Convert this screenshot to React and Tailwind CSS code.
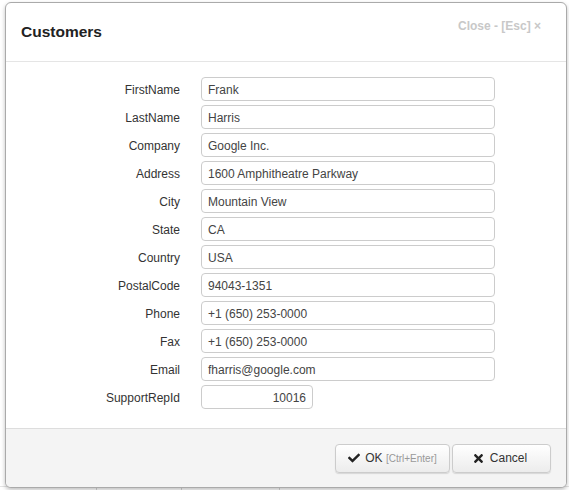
import React from "react";
import { FaCheck, FaTimes } from "react-icons/fa";

const fields = [
  ["FirstName", "Frank"],
  ["LastName", "Harris"],
  ["Company", "Google Inc."],
  ["Address", "1600 Amphitheatre Parkway"],
  ["City", "Mountain View"],
  ["State", "CA"],
  ["Country", "USA"],
  ["PostalCode", "94043-1351"],
  ["Phone", "+1 (650) 253-0000"],
  ["Fax", "+1 (650) 253-0000"],
  ["Email", "fharris@google.com"],
];

const App = () => {
  return (
    <div className="relative h-[490px] w-[569px] overflow-hidden bg-white font-['Liberation_Sans',Arial,sans-serif] text-[12px] text-[#333]">
      {/* grid underneath the dialog */}
      <div className="absolute bottom-0 left-0 right-0 h-[4px] border-t border-[#e4e4e4]">
        <div className="absolute left-[96px] top-0 h-full border-l border-[#d6d6d6]" />
        <div className="absolute left-[181px] top-0 h-full border-l border-[#d6d6d6]" />
        <div className="absolute left-[279px] top-0 h-full border-l border-[#d6d6d6]" />
      </div>

      {/* dialog */}
      <div className="relative ml-[5px] mt-[2px] flex h-[486px] w-[562px] flex-col overflow-hidden rounded-[6px] border border-[#aaa] bg-white shadow-[0_2px_4px_rgba(0,0,0,0.25)]">
        {/* header */}
        <div className="relative flex h-[59px] items-center border-b border-[#e5e5e5] px-[15px]">
          <h2 className="text-[15.5px] font-bold text-[#222]">Customers</h2>
          <span className="absolute right-[25px] top-[14px] text-[12px] font-bold text-[#c8c8c8]">
            Close - [Esc] ×
          </span>
        </div>

        {/* body */}
        <div className="flex flex-1 flex-col gap-[4px] pt-[15px]">
          {fields.map(([label, value]) => (
            <div key={label} className="flex items-center">
              <label className="w-[174px] pt-[1px] text-right">{label}</label>
              <div className="ml-[21px] flex h-[24px] w-[294px] items-center rounded-[4px] border border-[#ccc] px-[6px] pt-[1px] text-[#444]">
                {value}
              </div>
            </div>
          ))}
          <div className="flex items-center">
            <label className="w-[174px] pt-[1px] text-right">SupportRepId</label>
            <div className="ml-[21px] flex h-[24px] w-[112px] items-center justify-end rounded-[4px] border border-[#ccc] px-[6px] pt-[1px] text-[#444]">
              10016
            </div>
          </div>
        </div>

        {/* footer */}
        <div className="flex h-[59px] items-center justify-end gap-[2px] border-t border-[#ddd] bg-[#f4f4f4] pr-[15px]">
          <button className="flex h-[29px] w-[115px] items-center justify-center gap-[5px] rounded-[4px] border border-[#ccc] bg-gradient-to-b from-white to-[#ececec] text-[12px] text-[#333] shadow-[0_1px_1px_rgba(0,0,0,0.12)]">
            <FaCheck className="h-[12px] w-[12px] text-[#222]" />
            <span>
              OK <span className="text-[10px] text-[#999]">[Ctrl+Enter]</span>
            </span>
          </button>
          <button className="flex h-[29px] w-[99px] items-center justify-center gap-[5px] rounded-[4px] border border-[#ccc] bg-gradient-to-b from-white to-[#ececec] pr-[4px] text-[12px] text-[#333] shadow-[0_1px_1px_rgba(0,0,0,0.12)]">
            <FaTimes className="h-[13px] w-[13px] text-[#222]" />
            Cancel
          </button>
        </div>
      </div>
    </div>
  );
};

export default App;
